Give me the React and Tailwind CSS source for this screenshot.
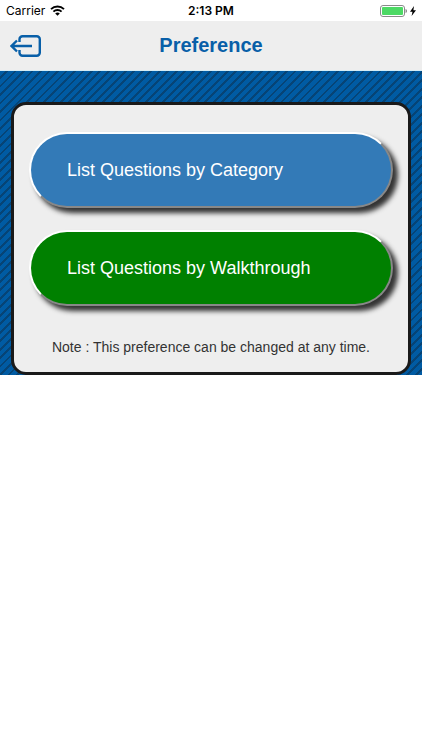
import clsx from 'clsx';

const options = [
  { id: 'category', label: 'List Questions by Category', color: 'bg-[#337ab7]' },
  { id: 'walkthrough', label: 'List Questions by Walkthrough', color: 'bg-[#008000]' },
];

function StatusBar() {
  return (
    <div className="grid grid-cols-3 items-center h-[21px] px-[6px] bg-white text-black text-[12px] font-[Inter,sans-serif]">
      <div className="flex items-center gap-[5px]">
        <span>Carrier</span>
        <svg className="w-[15px] h-[11px]" viewBox="0 0 15 11" fill="none" stroke="black" strokeWidth="1.9">
          <path d="M1 4.1a9.4 9.4 0 0 1 13 0" />
          <path d="M3.4 6.6a6 6 0 0 1 8.2 0" />
          <path d="M7.5 10.8 5.2 8.5a3.4 3.4 0 0 1 4.6 0z" fill="black" stroke="none" />
        </svg>
      </div>
      <span className="text-center font-semibold">2:13 PM</span>
      <div className="flex items-center justify-end gap-[3px]">
        <svg className="w-[27px] h-[12px]" viewBox="0 0 27 12">
          <rect x="0.5" y="0.5" width="24" height="11" rx="2.5" fill="white" stroke="#8a8a8a" />
          <rect x="2" y="2" width="21" height="8" rx="1" fill="#4cd964" />
          <path d="M25.500 4v4c1-.3 1.500-1 1.500-2s-.5-1.700-1.500-2z" fill="#8a8a8a" />
        </svg>
        <svg className="w-[6px] h-[10px]" viewBox="0 0 6 10" fill="black">
          <path d="M4 0 0 5.700h2.500L1.600 10 6 4.200H3.400z" />
        </svg>
      </div>
    </div>
  );
}

function Header() {
  return (
    <header className="grid grid-cols-[40px_1fr_40px] items-center h-[49px] px-[6px] bg-[#eeeeee]">
      <button type="button" aria-label="Exit" className="flex items-center justify-center h-10">
        <svg className="w-8 h-6" viewBox="0 0 32 24" fill="none" stroke="#085fa8" strokeWidth="2.4">
          <path d="M9.500 8V5.200a3 3 0 0 1 3-3h14.300a3 3 0 0 1 3 3v13.600a3 3 0 0 1-3 3H12.500a3 3 0 0 1-3-3V16" />
          <path d="M22 12H1.500M7 6.500 1.500 12 7 17.500" />
        </svg>
      </button>
      <h1 className="pb-[2px] text-center text-[20px] leading-6 font-bold text-[#085fa8]">Preference</h1>
    </header>
  );
}

export default function App() {
  return (
    <div className="min-h-screen bg-white font-['Liberation_Sans',Arial,sans-serif]">
      <StatusBar />
      <Header />
      {/* Striped backdrop behind the card */}
      <main className="border-t border-[#d5ecf5] bg-[#005ba3] bg-[repeating-linear-gradient(135deg,#005ba3_0_4px,#064476_4px_6px)] px-[11px] pt-[31px]">
        <section className="rounded-[15px] border-3 border-[#1a1a1a] bg-[#eeeeee] px-[15px] pt-[27px] pb-[15px]">
          <div className="flex flex-col gap-[22px]">
            {options.map(({ id, label, color }) => (
              <button
                key={id}
                type="button"
                className={clsx(
                  'h-[76px] w-full rounded-full border-2 border-t-white border-l-white border-r-[#888888] border-b-[#888888]',
                  'pl-[36px] text-left text-[18px] text-white shadow-[5px_5px_5px_#333333]',
                  color
                )}
              >
                {label}
              </button>
            ))}
          </div>
          <p className="mt-[31px] text-center text-[14px] leading-5 text-[#333333]">
            Note : This preference can be changed at any time.
          </p>
        </section>
      </main>
    </div>
  );
}
